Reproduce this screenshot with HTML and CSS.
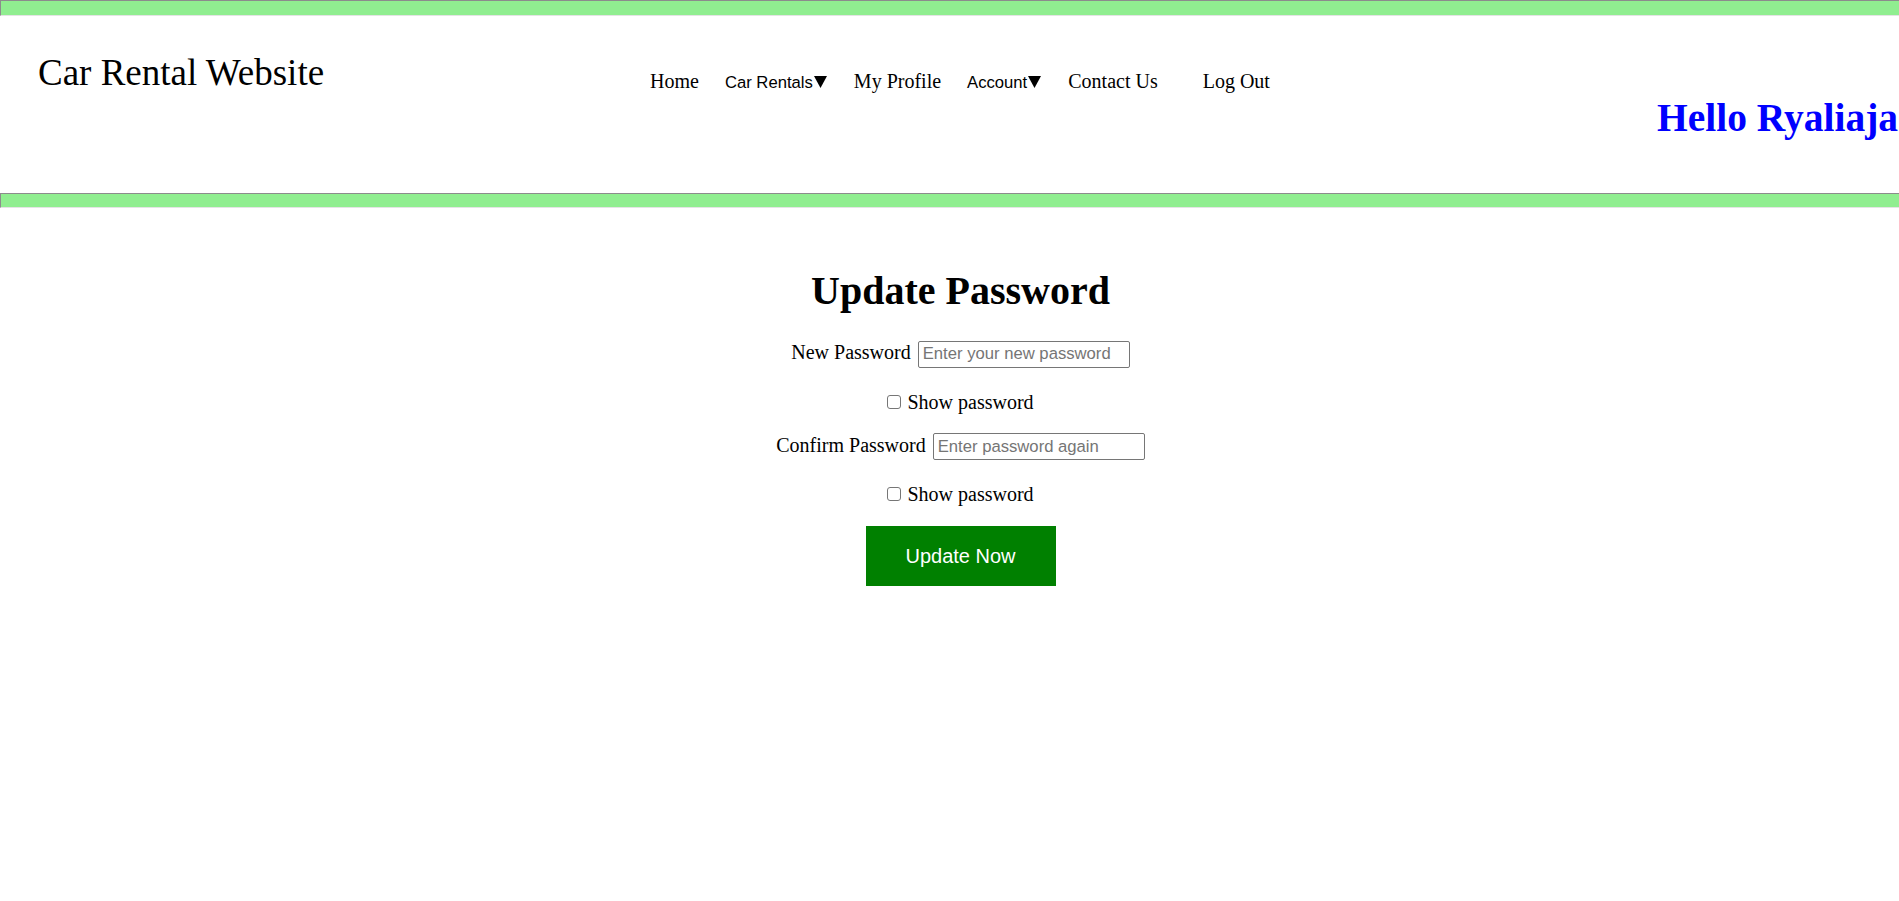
FILE: index.html
```html
<!DOCTYPE html>
<html lang="en">
<head>
<meta charset="utf-8">
<title>Update Password</title>
<link rel="stylesheet" href="styles.css">
</head>
<body>
<div class="page">
  <div class="band band-top"></div>
  <header class="header">
    <div class="brand">Car Rental Website</div>
    <nav class="nav">
      <a class="nav-link" href="#">Home</a>
      <button class="nav-drop" type="button">Car Rentals<svg class="caret" width="15" height="12" viewBox="0 0 15 12" aria-hidden="true"><polygon points="1,0 14,0 7.5,12"/></svg></button>
      <a class="nav-link" href="#">My Profile</a>
      <button class="nav-drop" type="button">Account<svg class="caret" width="15" height="12" viewBox="0 0 15 12" aria-hidden="true"><polygon points="1,0 14,0 7.5,12"/></svg></button>
      <a class="nav-link" href="#">Contact Us</a>
      <a class="nav-link nav-logout" href="#">Log Out</a>
    </nav>
    <h2 class="hello">Hello Ryaliaja</h2>
  </header>
  <div class="band band-bottom"></div>
  <main class="main">
    <h1 class="title">Update Password</h1>
    <div class="row row-first">
      <label class="label" for="np">New Password</label>
      <input class="field" id="np" type="password" placeholder="Enter your new password">
    </div>
    <div class="row check-row check-first">
      <input class="check" type="checkbox" id="s1">
      <label class="check-label" for="s1">Show password</label>
    </div>
    <div class="row row-second">
      <label class="label" for="cp">Confirm Password</label>
      <input class="field" id="cp" type="password" placeholder="Enter password again">
    </div>
    <div class="row check-row check-second">
      <input class="check" type="checkbox" id="s2">
      <label class="check-label" for="s2">Show password</label>
    </div>
    <button class="submit" type="button">Update Now</button>
  </main>
</div>
</body>
</html>
```

FILE: styles.css
```css
html, body {
  margin: 0;
  padding: 0;
  overflow: hidden;
  background: #ffffff;
}

.page {
  width: 1921px;
  min-height: 901px;
  font-family: "Liberation Serif", "Times New Roman", serif;
  color: #000;
}

.band {
  box-sizing: content-box;
  background: #90ee90;
  border-top: 1px solid #8c8c8c;
  border-left: 1px solid #8c8c8c;
  border-right: 1px solid #8c8c8c;
  border-bottom: 1px solid #e4e4e4;
}

.band-top {
  height: 14px;
}

.band-bottom {
  height: 13px;
}

.header {
  height: 177px;
  box-sizing: border-box;
  padding-left: 38px;
  padding-top: 38px;
  display: grid;
  grid-template-columns: 612px 1007px auto;
  align-items: start;
}

.brand {
  font-size: 37px;
  line-height: 37px;
  white-space: nowrap;
}

.nav {
  margin-top: 17px;
  display: flex;
  align-items: baseline;
  gap: 26px;
}

.nav-link {
  font-family: "Liberation Serif", "Times New Roman", serif;
  font-size: 20px;
  line-height: 20px;
  color: #000;
  text-decoration: none;
  white-space: nowrap;
}

.nav-drop {
  font-family: "Liberation Sans", Arial, sans-serif;
  font-size: 16.67px;
  line-height: 18px;
  color: #000;
  background: none;
  border: none;
  padding: 0;
  margin: 0;
  white-space: nowrap;
}

.caret {
  display: inline-block;
  vertical-align: baseline;
  fill: #000;
}

.nav-logout {
  margin-left: 19px;
}

.hello {
  margin: 44px 0 0 0;
  font-size: 39.5px;
  line-height: 40px;
  font-weight: bold;
  color: #0000ff;
  white-space: nowrap;
}

.main {
  display: flex;
  flex-direction: column;
  align-items: center;
}

.title {
  margin: 63px 0 0 0;
  font-size: 40px;
  line-height: 40px;
  font-weight: bold;
}

.row {
  display: flex;
  align-items: baseline;
  gap: 7px;
  font-size: 20px;
}

.row-first {
  margin-top: 29px;
}

.row-second {
  margin-top: 19px;
}

.label {
  font-size: 20px;
  line-height: 24px;
}

.field {
  box-sizing: border-box;
  width: 212px;
  height: 27px;
  margin: 0;
  padding: 0 4px;
  border: 1px solid #767676;
  border-radius: 2px;
  font-family: "Liberation Sans", Arial, sans-serif;
  font-size: 16.67px;
  color: #000;
  background: #fff;
}

.field::placeholder {
  color: #757575;
}

.check-row {
  align-items: flex-end;
  gap: 6px;
  line-height: 24px;
}

.check-first {
  margin-top: 22px;
}

.check-second {
  margin-top: 22px;
}

.check {
  appearance: none;
  -webkit-appearance: none;
  box-sizing: border-box;
  width: 14px;
  height: 14px;
  margin: 0 0 5px 0;
  border: 1px solid #767676;
  border-radius: 3px;
  background: #fff;
}

.check-label {
  font-size: 20px;
  line-height: 24px;
}

.submit {
  margin-top: 20px;
  width: 190px;
  height: 60px;
  border: none;
  background: #008000;
  color: #ffffff;
  font-family: "Liberation Sans", Arial, sans-serif;
  font-size: 20px;
  padding: 0;
}
```
